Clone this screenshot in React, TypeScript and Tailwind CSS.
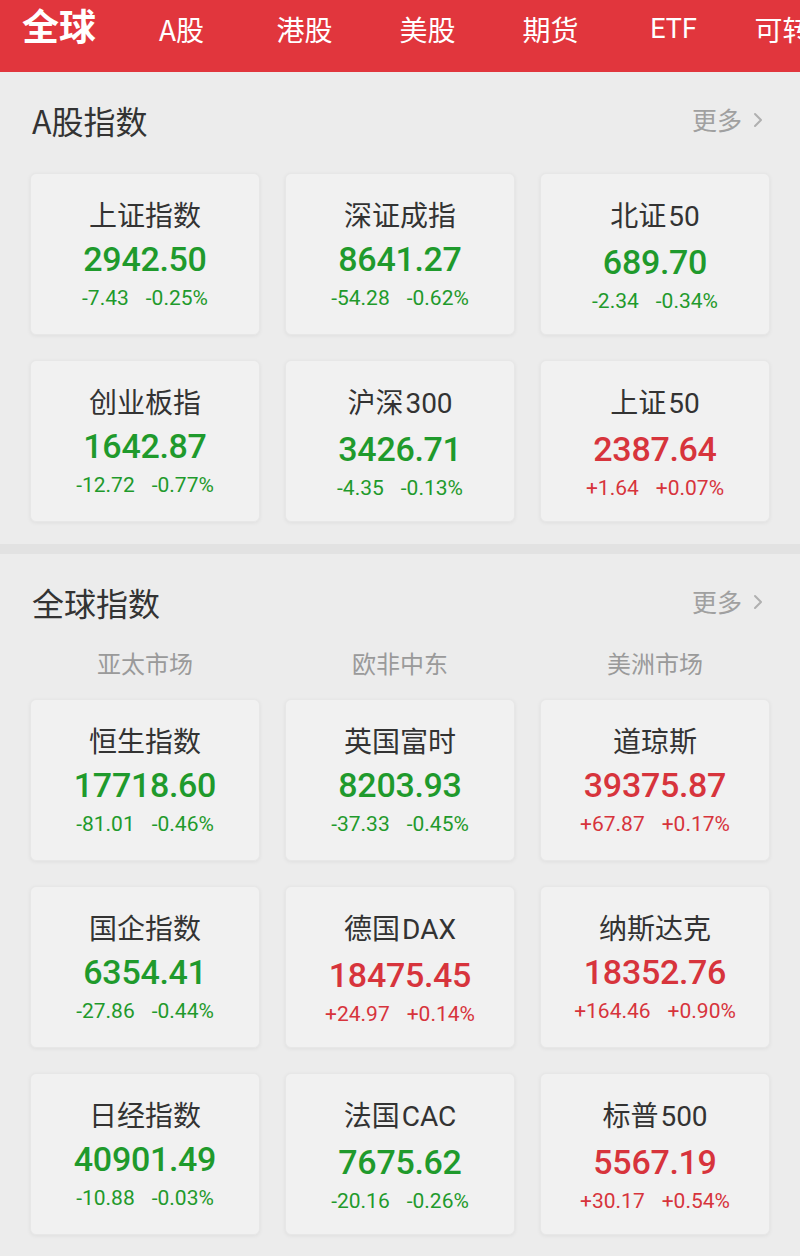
import { ChevronRight } from "lucide-react";

type Quote = { name: string; value: string; diff: string; pct: string };

const TABS = ["A股", "港股", "美股", "期货", "ETF", "可转债"];

const A_SHARES: Quote[] = [
  { name: "上证指数", value: "2942.50", diff: "-7.43", pct: "-0.25%" },
  { name: "深证成指", value: "8641.27", diff: "-54.28", pct: "-0.62%" },
  { name: "北证50", value: "689.70", diff: "-2.34", pct: "-0.34%" },
  { name: "创业板指", value: "1642.87", diff: "-12.72", pct: "-0.77%" },
  { name: "沪深300", value: "3426.71", diff: "-4.35", pct: "-0.13%" },
  { name: "上证50", value: "2387.64", diff: "+1.64", pct: "+0.07%" },
];

const GLOBAL: Quote[] = [
  { name: "恒生指数", value: "17718.60", diff: "-81.01", pct: "-0.46%" },
  { name: "英国富时", value: "8203.93", diff: "-37.33", pct: "-0.45%" },
  { name: "道琼斯", value: "39375.87", diff: "+67.87", pct: "+0.17%" },
  { name: "国企指数", value: "6354.41", diff: "-27.86", pct: "-0.44%" },
  { name: "德国DAX", value: "18475.45", diff: "+24.97", pct: "+0.14%" },
  { name: "纳斯达克", value: "18352.76", diff: "+164.46", pct: "+0.90%" },
  { name: "日经指数", value: "40901.49", diff: "-10.88", pct: "-0.03%" },
  { name: "法国CAC", value: "7675.62", diff: "-20.16", pct: "-0.26%" },
  { name: "标普500", value: "5567.19", diff: "+30.17", pct: "+0.54%" },
];

// Split "沪深300" so the latin part gets the number font.
function Name({ text }: { text: string }) {
  const m = text.match(/^(.*?)([A-Z0-9]+)$/);
  if (!m) return <span>{text}</span>;
  return (
    <span>
      <span>{m[1]}</span>
      <span className="ml-0.5 font-['Roboto','Noto_Sans_CJK_SC',sans-serif]">{m[2]}</span>
    </span>
  );
}

function Card({ q }: { q: Quote }) {
  const up = q.diff.startsWith("+");
  const color = up ? "text-[#d7343c]" : "text-[#1f9a2c]";
  return (
    <div className="flex h-[162px] flex-col items-center rounded-md border border-[#e7e7e7] bg-[#f1f1f1] pt-[20px] shadow-[0_1px_4px_rgba(0,0,0,0.06)]">
      <div className="text-[28px] leading-[40px] text-[#333333]">
        <Name text={q.name} />
      </div>
      <div
        className={`mt-[4px] font-['Roboto','Noto_Sans_CJK_SC',sans-serif] text-[34px] font-medium leading-[42px] tracking-[-0.3px] ${color}`}
      >
        {q.value}
      </div>
      <div
        className={`mt-[4px] flex gap-[17px] font-['Roboto','Noto_Sans_CJK_SC',sans-serif] text-[21px] leading-[28px] ${color}`}
      >
        <span>{q.diff}</span>
        <span>{q.pct}</span>
      </div>
    </div>
  );
}

function SectionHead({ title }: { title: string }) {
  return (
    <div className="flex items-center justify-between pl-[32px] pr-[30px]">
      <h2 className="text-[32px] leading-[40px] text-[#333333]">{title}</h2>
      <div className="flex items-center text-[25px] text-[#a0a0a0]">
        更多
        <ChevronRight size={24} strokeWidth={2} className="ml-1 text-[#b0b0b0]" />
      </div>
    </div>
  );
}

export default function App() {
  return (
    <div className="h-[1256px] w-[800px] overflow-hidden bg-[#ececec] font-['Noto_Sans_CJK_SC','Noto_Sans',sans-serif]">
      <header className="flex h-[72px] items-start overflow-hidden whitespace-nowrap bg-[#e1363d] pt-[4px] text-white">
        <span className="ml-[22px] text-[37px] font-bold leading-[42px]">全球</span>
        <nav className="ml-[24px] flex pt-[7px] text-[28px] leading-[36px]">
          {TABS.map((t) => (
            <span
              key={t}
              className={`w-[123px] shrink-0 text-center ${
                t === "ETF" ? "font-['Roboto','Noto_Sans_CJK_SC',sans-serif] text-[27px]" : ""
              }`}
            >
              {t}
            </span>
          ))}
        </nav>
      </header>

      <section className="pt-[28px]">
        <SectionHead title="A股指数" />
        <div className="mt-[33px] grid grid-cols-3 gap-[25px] px-[30px]">
          {A_SHARES.map((q) => (
            <Card key={q.name} q={q} />
          ))}
        </div>
      </section>

      <div className="mt-[22px] h-[10px] bg-[#e2e2e2]" />

      <section className="pt-[28px]">
        <SectionHead title="全球指数" />
        <div className="mt-[23px] grid grid-cols-3 gap-[25px] px-[30px] text-center text-[24px] leading-[36px] text-[#9a9a9a]">
          <span>亚太市场</span>
          <span>欧非中东</span>
          <span>美洲市场</span>
        </div>
        <div className="mt-[18px] grid grid-cols-3 gap-x-[25px] gap-y-[25px] px-[30px]">
          {GLOBAL.map((q) => (
            <Card key={q.name} q={q} />
          ))}
        </div>
      </section>
    </div>
  );
}
